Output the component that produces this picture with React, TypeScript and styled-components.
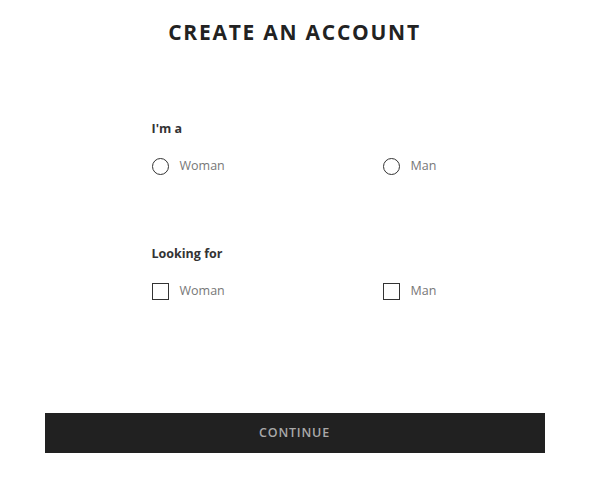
import React from "react";
import styled, { createGlobalStyle } from "styled-components";

const Global = createGlobalStyle`
  html, body { margin: 0; padding: 0; background: #fff; }
  body { font-family: "Open Sans", "Noto Sans", sans-serif; }
  * { box-sizing: border-box; }
`;

const Page = styled.div`
  width: 589px;
  height: 484px;
  display: flex;
  flex-direction: column;
  align-items: center;
`;

const Title = styled.h1`
  margin: 17px 0 0 0;
  font-size: 21px;
  line-height: 30px;
  font-weight: 700;
  letter-spacing: 1.75px;
  color: #222;
  text-align: center;
`;

const Form = styled.div`
  width: 500px;
  padding-left: 107px;
  margin-top: 73px;
  display: flex;
  flex-direction: column;
  gap: 70px;
`;

const Group = styled.div`
  display: flex;
  flex-direction: column;
  gap: 19px;
`;

const Label = styled.div`
  font-size: 12.5px;
  font-weight: 700;
  color: #333;
  line-height: 18px;
`;

const Options = styled.div`
  display: grid;
  grid-template-columns: 231px 1fr;
`;

const Option = styled.label`
  display: flex;
  align-items: center;
  gap: 11px;
  font-size: 12.5px;
  color: #777;
  line-height: 18px;
`;

const Box = styled.span<{ $round?: boolean }>`
  width: 17px;
  height: 17px;
  border: 1.3px solid #333;
  border-radius: ${(p) => (p.$round ? "50%" : "0")};
  display: inline-block;
  flex: none;
`;

const Button = styled.button`
  margin-top: auto;
  margin-bottom: 31px;
  width: 500px;
  height: 40px;
  background: #212121;
  border: none;
  color: #a9a9a9;
  font-family: "Open Sans", "Noto Sans", sans-serif;
  font-size: 12.5px;
  font-weight: 600;
  letter-spacing: 0.8px;
  padding: 0 0 2px 0;
`;

export default function App() {
  return (
    <Page>
      <Global />
      <Title>CREATE AN ACCOUNT</Title>
      <Form>
        <Group>
          <Label>I'm a</Label>
          <Options>
            <Option><Box $round />Woman</Option>
            <Option><Box $round />Man</Option>
          </Options>
        </Group>
        <Group>
          <Label>Looking for</Label>
          <Options>
            <Option><Box />Woman</Option>
            <Option><Box />Man</Option>
          </Options>
        </Group>
      </Form>
      <Button>CONTINUE</Button>
    </Page>
  );
}
